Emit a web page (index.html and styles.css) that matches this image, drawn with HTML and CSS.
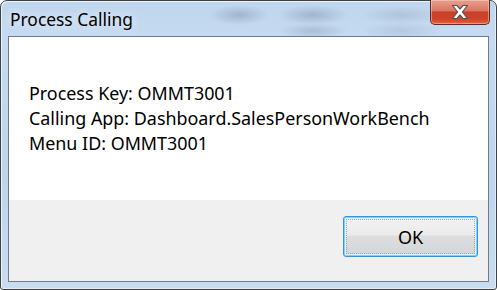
FILE: index.html
```html
<!DOCTYPE html>
<html>
<head>
<meta charset="utf-8">
<title>Process Calling</title>
<link rel="stylesheet" href="styles.css">
</head>
<body>
<div class="window">
<div class="titlebar">
<div class="caption">Process Calling</div>
<div class="close">
<svg width="18" height="16" viewBox="0 0 18 16"><path d="M1.5 1.5h4.5l3 3.6 3-3.6h4.5l-5.2 6.5 5.2 6.5h-4.5l-3-3.6-3 3.6h-4.5l5.2-6.5z" fill="#fff" stroke="#555" stroke-width="1.2" stroke-linejoin="round"/></svg>
</div>
</div>
<div class="client">
<div class="message">
<p>Process Key: OMMT3001</p>
<p>Calling App: Dashboard.SalesPersonWorkBench</p>
<p>Menu ID: OMMT3001</p>
</div>
<div class="buttons">
<button class="btn">OK</button>
</div>
</div>
</div>
</body>
</html>
```

FILE: styles.css
```css
body {
  margin: 0;
  background: #fff;
  font-family: "Noto Sans", "Open Sans", sans-serif;
}
.window {
  width: 497px;
  height: 290px;
  box-sizing: border-box;
  border: 1px solid #3c4148;
  border-radius: 7px 7px 3px 3px;
  padding: 0 7px 7px;
  display: flex;
  flex-direction: column;
  background:
    radial-gradient(ellipse 30px 10px at 238px 14px, rgba(120,140,165,.45), transparent),
    radial-gradient(ellipse 35px 10px at 312px 14px, rgba(120,140,165,.45), transparent),
    radial-gradient(ellipse 35px 8px at 312px 30px, rgba(120,140,165,.35), transparent),
    radial-gradient(ellipse 40px 9px at 400px 14px, rgba(130,150,170,.3), transparent),
    radial-gradient(ellipse 40px 9px at 400px 30px, rgba(130,150,170,.25), transparent),
    linear-gradient(to bottom, #c0d6ee 0, #c6dbf1 40px, #bed5ee 60%, #c9dcf0 100%);
  box-shadow: inset 1px 1px 0 rgba(255,255,255,.7), inset -1px -1px 0 rgba(255,255,255,.5);
}
.titlebar {
  height: 35px;
  display: flex;
  align-items: flex-start;
  justify-content: space-between;
}
.caption {
  font-size: 17.4px;
  color: #000;
  padding: 6px 0 0 2px;
  text-shadow: 0 0 8px rgba(255,255,255,.9);
}
.close {
  width: 58px;
  height: 24px;
  margin: -1px -1px 0 0;
  border: 1px solid #5b2a22;
  border-top: none;
  border-radius: 0 0 5px 5px;
  background: linear-gradient(to bottom, #e8a190 0, #da7660 45%, #c8402a 50%, #cf4428 80%, #e2633e 100%);
  box-shadow: inset 0 0 0 1px rgba(255,220,210,.45);
  display: flex;
  align-items: center;
  justify-content: center;
}
.close svg { display: block; }
.client {
  flex: 1;
  border: 1px solid #6e7d8c;
  display: flex;
  flex-direction: column;
  background: #f0f0f0;
}
.message {
  height: 163px;
  background: #fff;
  padding: 0 20px;
  display: flex;
  flex-direction: column;
  justify-content: center;
  font-size: 17.9px;
  line-height: 25px;
  color: #000;
}
.message p { margin: 0; }
.buttons {
  flex: 1;
  display: flex;
  justify-content: flex-end;
  align-items: flex-start;
  padding: 16px 10px 0 0;
}
.btn {
  width: 135px;
  height: 41px;
  border: 1px solid #3c8fd8;
  border-radius: 3px;
  font-family: inherit;
  font-size: 18px;
  color: #000;
  background: linear-gradient(to bottom, #f2f2f2 0, #ebebeb 45%, #dddddd 50%, #d3d6d9 100%);
  box-shadow: inset 0 0 0 1px #7fd3f7, inset 0 0 0 2px #dff3fb;
  outline: 1px dotted #9aa;
  outline-offset: -4px;
  padding: 0;
}
```
